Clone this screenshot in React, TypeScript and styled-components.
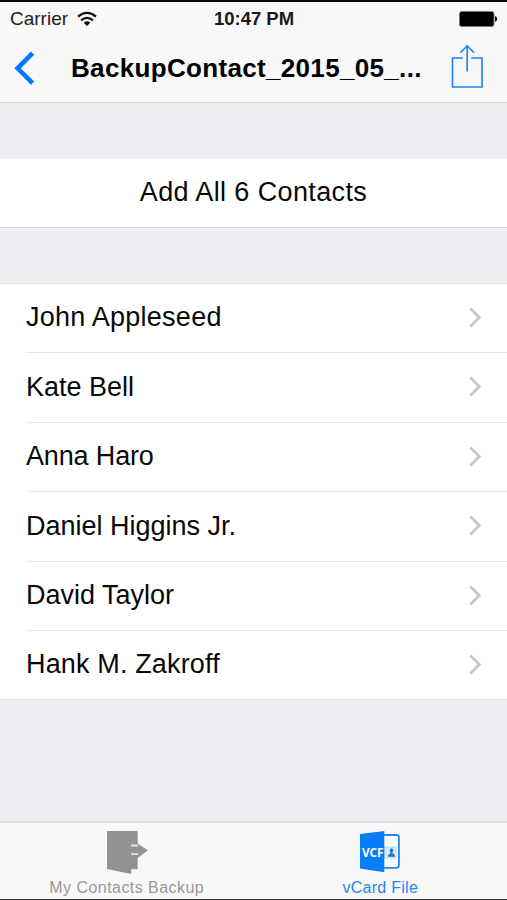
import React from 'react';
import styled, { createGlobalStyle } from 'styled-components';

const GlobalStyle = createGlobalStyle`
  * { box-sizing: border-box; }
  body {
    margin: 0;
    background: #efeff4;
    font-family: "Liberation Sans", Arial, sans-serif;
    color: #000;
  }
`;

const Screen = styled.div`
  width: 507px;
  height: 900px;
  display: flex;
  flex-direction: column;
  overflow: hidden;
  background: #efeef3;
  border-top: 2px solid #0c0a0c;
  border-bottom: 1px solid #3a383a;
`;

const Header = styled.header`
  height: 101px;
  flex: none;
  background: #f8f8f8;
  border-bottom: 1px solid #d9d9dc;
`;

const StatusBar = styled.div`
  height: 33px;
  display: grid;
  grid-template-columns: 1fr auto 1fr;
  align-items: center;
  padding: 0 9px 0 10px;
`;

const Carrier = styled.div`
  display: flex;
  align-items: center;
  gap: 9px;
`;

const Label = styled.span<{ $size: number; $spacing?: number; $bold?: boolean; $color?: string }>`
  font-size: ${(p) => p.$size}px;
  letter-spacing: ${(p) => p.$spacing ?? 0}px;
  font-weight: ${(p) => (p.$bold ? 700 : 400)};
  color: ${(p) => p.$color ?? '#080808'};
  line-height: 1.15;
  white-space: nowrap;
`;

const BatterySlot = styled.div`
  display: flex;
  justify-content: flex-end;
`;

const NavBar = styled.nav`
  height: 66px;
  display: flex;
  align-items: center;
  padding: 0 23px 0 13px;
`;

const IconButton = styled.button<{ $raise?: number }>`
  padding: 0 0 ${(p) => p.$raise ?? 0}px;
  border: 0;
  background: none;
  display: flex;
`;

const Title = styled.h1`
  margin: 0 0 0 34px;
  flex: 1;
  font-size: 26px;
  line-height: 30px;
  font-weight: 700;
  letter-spacing: 0.33px;
  white-space: nowrap;
`;

const Content = styled.main`
  flex: 1;
  padding-top: 56px;
`;

const AddAll = styled.button`
  width: 100%;
  height: 69px;
  margin: 0 0 55px;
  padding: 0;
  border: 0;
  border-bottom: 1px solid #d6d6da;
  background: #fff;
  display: flex;
  align-items: center;
  justify-content: center;
  font-family: inherit;
`;

const List = styled.ul`
  list-style: none;
  margin: 0;
  padding: 0;
  height: 417px;
  display: grid;
  grid-template-rows: 68px repeat(4, 69.5px) 69px;
  background: #fff;
  border-top: 1px solid #e3e3e7;
  border-bottom: 1px solid #e3e3e6;
`;

const Row = styled.li`
  margin-left: 26px;
  padding-right: 25px;
  display: flex;
  align-items: center;
  justify-content: space-between;
  & + & { border-top: 1px solid #e7e7e9; }
`;

const TabBar = styled.footer`
  height: 78px;
  flex: none;
  display: grid;
  grid-template-columns: 1fr 1fr;
  background: #f8f8f8;
  border-top: 2px solid #e2e2e5;
`;

const Tab = styled.div`
  display: flex;
  flex-direction: column;
  align-items: center;
  padding-top: 7px;
  gap: 5px;
`;

const WifiIcon = () => (
  <svg width="20" height="16" viewBox="0 0 20 15" fill="none" stroke="#111" strokeWidth="2.3">
    <path d="M1 5.2Q10-2.4 19 5.2" />
    <path d="M4.1 8.9Q10 3.8 15.9 8.9" />
    <path d="M6.8 11.3Q10 8.4 13.2 11.3L10 14.4Z" fill="#111" stroke="none" />
  </svg>
);

const BatteryIcon = () => (
  <svg width="39" height="16" viewBox="0 0 39 16">
    <rect x=".5" y=".5" width="34.5" height="15" rx="2.2" fill="#000" stroke="#777" />
    <path d="M36 5.3C39 5.8 39 10.2 36 10.7Z" fill="#111" />
  </svg>
);

const BackIcon = () => (
  <svg width="24" height="34" viewBox="0 0 24 34" fill="none" stroke="#007aff" strokeWidth="4.6">
    <path d="M19.6 2.2L4.6 17.3L19.6 32.2" />
  </svg>
);

const ShareIcon = () => (
  <svg width="33" height="45" viewBox="0 0 33 45" fill="none" stroke="#1a82f7" strokeWidth="1.6">
    <path d="M11.8 14H1.5V43H31V14H20.3M16.2 27.5V2.2M9.3 8.8L16.2 1.8L23.1 8.8" />
  </svg>
);

const Chevron = () => (
  <svg width="14" height="22" viewBox="0 0 14 22" fill="none" stroke="#c7c7cb" strokeWidth="2.8">
    <path d="M2.4 1.4L11.3 10.4L2.4 19.4" />
  </svg>
);

const BackupIcon = () => (
  <svg width="44" height="44" viewBox="0 0 44 44" fill="#929292">
    <path d="M2 1H31.5Q32.7 1 32.7 2.2V13.5L43 20.5L32.7 27.7V39.3H26.2V44L2 39Z" />
    <path d="M26.2 15.5H33M26.2 24.2H33" stroke="#e6e6e6" strokeWidth="1.8" />
  </svg>
);

const VcfText = styled.text`
  font: 700 12px "Open Sans", sans-serif;
`;

const VCardIcon = () => (
  <svg width="44" height="44" viewBox="0 0 44 44">
    <path d="M26 5H38.5Q40.9 5 40.9 7.2V35.3Q40.9 37.9 38.3 37.9H26" fill="#fafdff" stroke="#2588f6" strokeWidth="1.8" />
    <path d="M26 17H38V28H26Z" fill="#d4e8fc" stroke="#a9d0f9" strokeWidth=".7" />
    <path d="M30 26.7Q30.1 23.8 32.7 23.3Q30.7 18.4 33.5 18.4Q36.3 18.4 34.3 23.3Q36.9 23.8 37 26.7Z" fill="#1677dc" />
    <path d="M2 4L26.3 1V42.2L2 38.6Z" fill="#087df8" />
    <VcfText x="4" y="26.8" textLength="21.5" lengthAdjust="spacingAndGlyphs" fill="#fff">VCF</VcfText>
  </svg>
);

const contacts = [
  { name: 'John Appleseed', spacing: 0.25 },
  { name: 'Kate Bell', spacing: 0 },
  { name: 'Anna Haro', spacing: -0.15 },
  { name: 'Daniel Higgins Jr.', spacing: 0 },
  { name: 'David Taylor', spacing: 0 },
  { name: 'Hank M. Zakroff', spacing: 0.15 },
];

export default function App() {
  return (
    <>
      <GlobalStyle />
      <Screen>
        <Header>
          <StatusBar>
            <Carrier>
              <Label $size={19} $color="#222">Carrier</Label>
              <WifiIcon />
            </Carrier>
            <Label $size={18.5} $bold $color="#181818">10:47 PM</Label>
            <BatterySlot><BatteryIcon /></BatterySlot>
          </StatusBar>
          <NavBar>
            <IconButton aria-label="Back"><BackIcon /></IconButton>
            <Title>BackupContact_2015_05_...</Title>
            <IconButton aria-label="Share" $raise={3}><ShareIcon /></IconButton>
          </NavBar>
        </Header>
        <Content>
          <AddAll><Label $size={27} $spacing={0.38}>Add All 6 Contacts</Label></AddAll>
          <List>
            {contacts.map((c) => (
              <Row key={c.name}>
                <Label $size={27} $spacing={c.spacing}>{c.name}</Label>
                <Chevron />
              </Row>
            ))}
          </List>
        </Content>
        <TabBar>
          <Tab>
            <BackupIcon />
            <Label $size={16} $spacing={0.45} $color="#989898">My Contacts Backup</Label>
          </Tab>
          <Tab>
            <VCardIcon />
            <Label $size={16} $spacing={0.27} $color="#2486f5">vCard File</Label>
          </Tab>
        </TabBar>
      </Screen>
    </>
  );
}
